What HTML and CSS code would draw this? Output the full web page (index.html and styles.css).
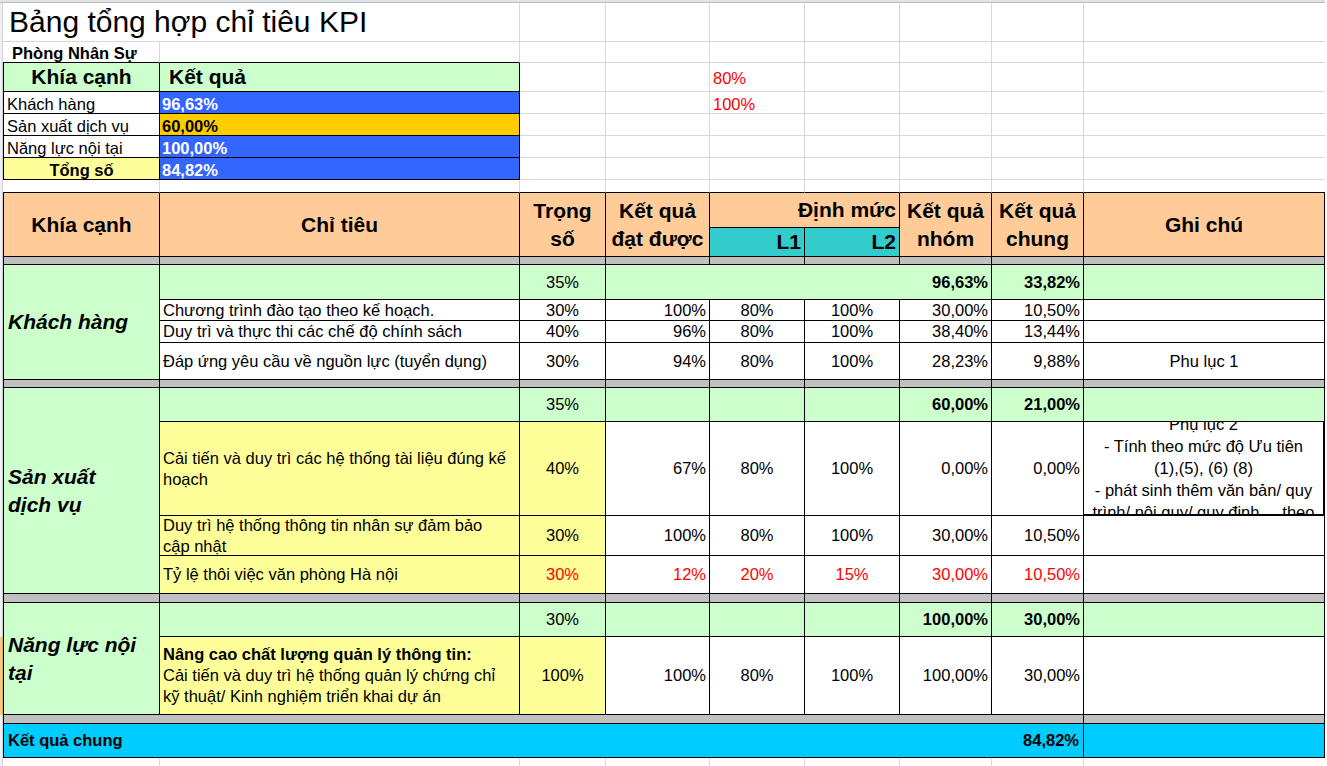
FILE: index.html
```html
<!DOCTYPE html>
<html lang="vi">
<head>
<meta charset="utf-8">
<title>Bảng tổng hợp chỉ tiêu KPI</title>
<link rel="stylesheet" href="styles.css">
</head>
<body>
<div class="sheet">
  <div class="colheads"></div>
  <div class="rowheads"></div>
  <div class="rowhead-sel"></div>

  <!-- row 1 -->
  <div class="c title s2">Bảng tổng hợp chỉ tiêu KPI</div>
  <div class="c"></div><div class="c"></div><div class="c"></div><div class="c"></div><div class="c"></div><div class="c"></div>
  <div class="c nr"></div>

  <!-- row 2 -->
  <div class="c b dept bb">Phòng Nhân Sự</div>
  <div class="c bb"></div>
  <div class="c"></div><div class="c"></div><div class="c"></div><div class="c"></div><div class="c"></div><div class="c"></div>
  <div class="c nr"></div>

  <!-- row 3 -->
  <div class="c t l green big ctr">Khía cạnh</div>
  <div class="c t green big indent">Kết quả</div>
  <div class="c"></div><div class="c"></div>
  <div class="c red mid">80%</div>
  <div class="c"></div><div class="c"></div><div class="c"></div>
  <div class="c nr"></div>

  <!-- row 4 -->
  <div class="c t l low">Khách hàng</div>
  <div class="c t blue low">96,63%</div>
  <div class="c"></div><div class="c"></div>
  <div class="c red low">100%</div>
  <div class="c"></div><div class="c"></div><div class="c"></div>
  <div class="c nr"></div>

  <!-- row 5 -->
  <div class="c t l low">Sản xuất dịch vụ</div>
  <div class="c t gold low">60,00%</div>
  <div class="c"></div><div class="c"></div><div class="c"></div><div class="c"></div><div class="c"></div><div class="c"></div>
  <div class="c nr"></div>

  <!-- row 6 -->
  <div class="c t l low">Năng lực nội tại</div>
  <div class="c t blue low">100,00%</div>
  <div class="c"></div><div class="c"></div><div class="c"></div><div class="c"></div><div class="c"></div><div class="c"></div>
  <div class="c nr"></div>

  <!-- row 7 -->
  <div class="c t l yellow b ctr low">Tổng số</div>
  <div class="c t blue low">84,82%</div>
  <div class="c"></div><div class="c"></div><div class="c"></div><div class="c"></div><div class="c"></div><div class="c"></div>
  <div class="c nr"></div>

  <!-- row 8 -->
  <div class="c bb"></div><div class="c bb"></div><div class="c bb"></div><div class="c bb"></div><div class="c bb"></div><div class="c bb"></div><div class="c bb"></div><div class="c bb"></div>
  <div class="c bb nr"></div>

  <!-- header rows 9-10 -->
  <div class="c t l hdr big ctr r2">Khía cạnh</div>
  <div class="c t hdr big ctr r2">Chỉ tiêu</div>
  <div class="c t hdr big ctr r2">Trọng<br>số</div>
  <div class="c t hdr big ctr r2">Kết quả<br>đạt được</div>
  <div class="c t hdr big rt s2">Định mức</div>
  <div class="c t hdr big ctr r2">Kết quả<br>nhóm</div>
  <div class="c t hdr big ctr r2">Kết quả<br>chung</div>
  <div class="c t hdr big ctr r2">Ghi chú</div>
  <div class="c t teal big rt">L1</div>
  <div class="c t teal big rt">L2</div>

  <!-- separator -->
  <div class="c t l gray"></div><div class="c t gray"></div><div class="c t gray"></div><div class="c t gray"></div><div class="c t gray"></div><div class="c t gray"></div><div class="c t gray"></div><div class="c t gray"></div><div class="c t gray"></div>

  <!-- Khách hàng group -->
  <div class="c t l green grp r4">Khách hàng</div>
  <div class="c t green"></div>
  <div class="c t green ctr">35%</div>
  <div class="c t green rt b s4">96,63%</div>
  <div class="c t green rt b">33,82%</div>
  <div class="c t green"></div>

  <div class="c t">Chương trình đào tạo theo kế hoạch.</div>
  <div class="c t ctr">30%</div>
  <div class="c t rt">100%</div>
  <div class="c t ctr">80%</div>
  <div class="c t ctr">100%</div>
  <div class="c t rt">30,00%</div>
  <div class="c t rt">10,50%</div>
  <div class="c t"></div>

  <div class="c t">Duy trì và thực thi các chế độ chính sách</div>
  <div class="c t ctr">40%</div>
  <div class="c t rt">96%</div>
  <div class="c t ctr">80%</div>
  <div class="c t ctr">100%</div>
  <div class="c t rt">38,40%</div>
  <div class="c t rt">13,44%</div>
  <div class="c t"></div>

  <div class="c t">Đáp ứng yêu cầu về nguồn lực (tuyển dụng)</div>
  <div class="c t ctr">30%</div>
  <div class="c t rt">94%</div>
  <div class="c t ctr">80%</div>
  <div class="c t ctr">100%</div>
  <div class="c t rt">28,23%</div>
  <div class="c t rt">9,88%</div>
  <div class="c t ctr">Phu lục 1</div>

  <!-- separator -->
  <div class="c t l gray"></div><div class="c t gray"></div><div class="c t gray"></div><div class="c t gray"></div><div class="c t gray"></div><div class="c t gray"></div><div class="c t gray"></div><div class="c t gray"></div><div class="c t gray"></div>

  <!-- Sản xuất dịch vụ group -->
  <div class="c t l green grp r4">Sản xuất<br>dịch vụ</div>
  <div class="c t green"></div>
  <div class="c t green ctr">35%</div>
  <div class="c t green"></div>
  <div class="c t green"></div>
  <div class="c t green"></div>
  <div class="c t green rt b">60,00%</div>
  <div class="c t green rt b">21,00%</div>
  <div class="c t green"></div>

  <div class="c t yellow">Cải tiến và duy trì các hệ thống tài liệu đúng kế<br>hoạch</div>
  <div class="c t yellow ctr">40%</div>
  <div class="c t rt">67%</div>
  <div class="c t ctr">80%</div>
  <div class="c t ctr">100%</div>
  <div class="c t rt">0,00%</div>
  <div class="c t rt">0,00%</div>
  <div class="c t ctr note">Phụ lục 2<br>- Tính theo mức độ Ưu tiên<br>(1),(5), (6) (8)<br>- phát sinh thêm văn bản/ quy<br>trình/ nội quy/ quy định ... theo</div>

  <div class="c t yellow">Duy trì hệ thống thông tin nhân sự đảm bảo<br>cập nhật</div>
  <div class="c t yellow ctr">30%</div>
  <div class="c t rt">100%</div>
  <div class="c t ctr">80%</div>
  <div class="c t ctr">100%</div>
  <div class="c t rt">30,00%</div>
  <div class="c t rt">10,50%</div>
  <div class="c t"></div>

  <div class="c t yellow">Tỷ lệ thôi việc văn phòng Hà nội</div>
  <div class="c t yellow ctr red">30%</div>
  <div class="c t rt red">12%</div>
  <div class="c t ctr red">20%</div>
  <div class="c t ctr red">15%</div>
  <div class="c t rt red">30,00%</div>
  <div class="c t rt red">10,50%</div>
  <div class="c t"></div>

  <!-- separator -->
  <div class="c t l gray"></div><div class="c t gray"></div><div class="c t gray"></div><div class="c t gray"></div><div class="c t gray"></div><div class="c t gray"></div><div class="c t gray"></div><div class="c t gray"></div><div class="c t gray"></div>

  <!-- Năng lực nội tại group -->
  <div class="c t l green grp r2">Năng lực nội<br>tại</div>
  <div class="c t green"></div>
  <div class="c t green ctr">30%</div>
  <div class="c t green"></div>
  <div class="c t green"></div>
  <div class="c t green"></div>
  <div class="c t green rt b">100,00%</div>
  <div class="c t green rt b">30,00%</div>
  <div class="c t green"></div>

  <div class="c t yellow"><span><b>Nâng cao chất lượng quản lý thông tin:</b><br>Cải tiến và duy trì hệ thống quản lý chứng chỉ<br>kỹ thuật/ Kinh nghiệm triển khai dự án</span></div>
  <div class="c t yellow ctr">100%</div>
  <div class="c t rt">100%</div>
  <div class="c t ctr">80%</div>
  <div class="c t ctr">100%</div>
  <div class="c t rt">100,00%</div>
  <div class="c t rt">30,00%</div>
  <div class="c t"></div>

  <!-- separator -->
  <div class="c t l gray s8"></div>
  <div class="c t gray"></div>

  <!-- total -->
  <div class="c t l cyan b s8 total"><span>Kết quả chung</span><span>84,82%</span></div>
  <div class="c t cyan"></div>

  <!-- trailing row -->
  <div class="c"></div><div class="c"></div><div class="c"></div><div class="c"></div><div class="c"></div><div class="c"></div><div class="c"></div><div class="c"></div>
  <div class="c nr"></div>
</div>
</body>
</html>
```

FILE: styles.css
```css
* {
  box-sizing: border-box;
}

html,
body {
  margin: 0;
  padding: 0;
  background: #ffffff;
}

body {
  font-family: "Liberation Sans", Arial, sans-serif;
  font-size: 16.5px;
  color: #000;
}

.sheet {
  display: grid;
  width: 1325px;
  height: 766px;
  overflow: hidden;
  grid-template-columns: 3px 157px 360px 86px 104px 95px 95px 92px 92px 241px;
  grid-template-rows:
    3px 39px 21px 29px 22px 22px 22px 22px 13px
    35px 29px 8px
    35px 21px 22px 37px 8px
    34px 94px 40px 38px 9px
    34px 78px 9px
    34px 30px;
}

.colheads {
  grid-column: 1 / -1;
  grid-row: 1;
  background: #dfe3e8;
  border-bottom: 1px solid #b9bfc7;
}

.rowheads {
  grid-column: 1;
  grid-row: 2 / -1;
  background: #eef0f3;
  border-right: 1px solid #cfd3d8;
}

.rowhead-sel {
  grid-column: 1;
  grid-row: 24;
  background: #f7cd86;
  border-right: 1px solid #e2aa4c;
}

.c {
  display: flex;
  align-items: center;
  min-width: 0;
  overflow: hidden;
  padding: 0 3px;
  white-space: nowrap;
  line-height: 21px;
  border-right: 1px solid #d8d8d8;
  border-bottom: 1px solid #d8d8d8;
}

.t {
  border-right-color: #000;
  border-bottom-color: #000;
}

.l {
  border-left: 1px solid #000;
}

.bb {
  border-bottom-color: #000;
}

.nr {
  border-right: none;
}

.s2 { grid-column: span 2; }
.s4 { grid-column: span 4; }
.s8 { grid-column: span 8; }
.r2 { grid-row: span 2; }
.r4 { grid-row: span 4; }

.ctr {
  justify-content: center;
  text-align: center;
}

.rt {
  justify-content: flex-end;
  text-align: right;
}

.low {
  align-items: flex-end;
  line-height: 18px;
}

.mid {
  padding-top: 3px;
}

.b {
  font-weight: bold;
}

.big {
  font-size: 21px;
  font-weight: bold;
  line-height: 28px;
}

.grp {
  font-size: 21px;
  font-weight: bold;
  font-style: italic;
  line-height: 28px;
  padding-left: 4px;
}

.title {
  font-size: 30px;
  padding-left: 6px;
  line-height: 34px;
}

.dept {
  padding-left: 9px;
  padding-top: 2px;
}

.indent {
  padding-left: 9px;
}

.red {
  color: #ff0000;
}

.green { background: #ccffcc; }
.yellow { background: #ffff99; }
.hdr { background: #ffcc99; }
.teal { background: #33cccc; }
.gray { background: #c0c0c0; }
.cyan { background: #00ccff; }

.blue {
  background: #3366ff;
  color: #ffffff;
  font-weight: bold;
  padding-left: 2px;
}

.gold {
  background: #ffcc00;
  font-weight: bold;
  padding-left: 2px;
}

.note {
  line-height: 22px;
  border-right: 2px solid #000;
  border-bottom: 2px solid #000;
}

.total {
  justify-content: space-between;
  padding: 0 4px;
}
```
